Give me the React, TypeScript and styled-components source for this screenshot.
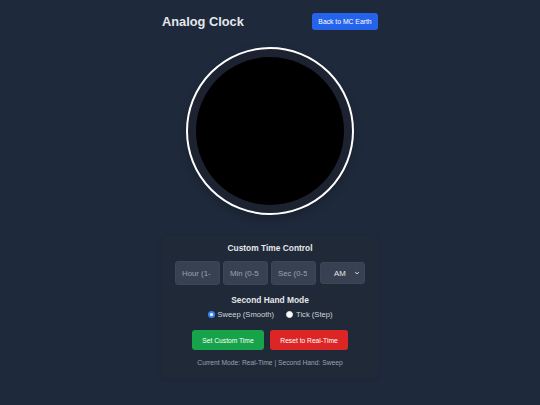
import React, { useState } from "react";
import styled, { createGlobalStyle } from "styled-components";

const Global = createGlobalStyle`
  html, body { margin: 0; padding: 0; background: #1e293b; }
  body { font-family: "Liberation Sans", Arial, sans-serif; color: #e5e7eb; }
  * { box-sizing: border-box; }
`;

const Page = styled.div`
  width: 540px;
  min-height: 405px;
  background: #1e293b;
  display: flex;
  justify-content: center;
`;

const Container = styled.div`
  width: 216px;
  padding-top: 13px;
  display: flex;
  flex-direction: column;
  align-items: center;
`;

const Header = styled.div`
  width: 100%;
  display: flex;
  justify-content: space-between;
  align-items: center;
  height: 17px;
`;

const Title = styled.h1`
  margin: 0;
  font-size: 12.8px;
  font-weight: 700;
  color: #e5e7eb;
`;

const BackButton = styled.button`
  background: #2563eb;
  color: #fff;
  border: none;
  border-radius: 3px;
  height: 17px;
  width: 66px;
  padding: 0;
  font-family: inherit;
  font-size: 6.8px;
  cursor: pointer;
`;

const ClockOuter = styled.div`
  margin-top: 17px;
  width: 168px;
  height: 168px;
  border-radius: 50%;
  border: 2px solid #ffffff;
  background: #1c2230;
  display: flex;
  align-items: center;
  justify-content: center;
  box-shadow: 0 4px 10px rgba(0, 0, 0, 0.2);
`;

const ClockFace = styled.div`
  width: 148px;
  height: 148px;
  border-radius: 50%;
  background: #000;
`;

const Panel = styled.div`
  margin-top: 21px;
  width: 216px;
  padding: 7px 13px 12px;
  background: #1f2937;
  border-radius: 4px;
  box-shadow: 0 1px 4px rgba(0, 0, 0, 0.12);
  display: flex;
  flex-direction: column;
  align-items: center;
`;

const SectionTitle = styled.h2`
  margin: 0;
  font-size: 8.4px;
  font-weight: 700;
  color: #e5e7eb;
  line-height: 10px;
`;

const InputRow = styled.div`
  margin-top: 8px;
  display: flex;
  gap: 3px;
  align-items: center;
`;

const TimeInput = styled.input`
  width: 45px;
  height: 24px;
  background: #374151;
  border: 1px solid #3b4656;
  border-radius: 3px;
  color: #e5e7eb;
  font-family: inherit;
  font-size: 7.8px;
  padding: 0 8px 0 6px;
  outline: none;
  &::placeholder { color: #9ca3af; }
`;

const SelectBox = styled.div`
  margin-left: 1px;
  width: 45px;
  height: 22px;
  background: #374151;
  border: 1px solid #3b4656;
  border-radius: 3px;
  display: flex;
  align-items: center;
  justify-content: space-between;
  padding: 0 4px 0 13px;
  font-size: 7.8px;
  color: #e5e7eb;
`;

const Chevron = styled.svg`
  width: 6px;
  height: 6px;
`;

const ModeTitle = styled(SectionTitle)`
  margin-top: 10px;
`;

const RadioRow = styled.div`
  margin-top: 5px;
  display: flex;
  gap: 12px;
  align-items: center;
`;

const RadioLabel = styled.label`
  display: flex;
  align-items: center;
  gap: 3px;
  font-size: 7.6px;
  color: #d1d5db;
  cursor: pointer;
`;

const RadioDot = styled.span<{ $checked: boolean }>`
  width: 7px;
  height: 7px;
  border-radius: 50%;
  background: #ffffff;
  border: ${(p) => (p.$checked ? "2px solid #3b82f6" : "1px solid #e5e7eb")};
  box-sizing: border-box;
`;

const ButtonRow = styled.div`
  margin-top: 11px;
  display: flex;
  gap: 6px;
`;

const ActionButton = styled.button<{ $color: string; $w: number }>`
  background: ${(p) => p.$color};
  color: #fff;
  border: none;
  border-radius: 3px;
  height: 20px;
  width: ${(p) => p.$w}px;
  font-family: inherit;
  font-size: 6.7px;
  padding: 0;
  cursor: pointer;
`;

const Status = styled.div`
  margin-top: 9px;
  font-size: 6.7px;
  color: #9ca3af;
`;

export default function App() {
  const [mode, setMode] = useState<"sweep" | "tick">("sweep");
  return (
    <>
      <Global />
      <Page>
        <Container>
          <Header>
            <Title>Analog Clock</Title>
            <BackButton>Back to MC Earth</BackButton>
          </Header>
          <ClockOuter>
            <ClockFace />
          </ClockOuter>
          <Panel>
            <SectionTitle>Custom Time Control</SectionTitle>
            <InputRow>
              <TimeInput placeholder="Hour (1-12)" />
              <TimeInput placeholder="Min (0-59)" />
              <TimeInput placeholder="Sec (0-59)" />
              <SelectBox>
                <span>AM</span>
                <Chevron viewBox="0 0 10 10">
                  <path d="M2 3.5 L5 6.5 L8 3.5" fill="none" stroke="#e5e7eb" strokeWidth="1.6" />
                </Chevron>
              </SelectBox>
            </InputRow>
            <ModeTitle>Second Hand Mode</ModeTitle>
            <RadioRow>
              <RadioLabel onClick={() => setMode("sweep")}>
                <RadioDot $checked={mode === "sweep"} />
                Sweep (Smooth)
              </RadioLabel>
              <RadioLabel onClick={() => setMode("tick")}>
                <RadioDot $checked={mode === "tick"} />
                Tick (Step)
              </RadioLabel>
            </RadioRow>
            <ButtonRow>
              <ActionButton $color="#16a34a" $w={72}>Set Custom Time</ActionButton>
              <ActionButton $color="#dc2626" $w={78}>Reset to Real-Time</ActionButton>
            </ButtonRow>
            <Status>Current Mode: Real-Time | Second Hand: {mode === "sweep" ? "Sweep" : "Tick"}</Status>
          </Panel>
        </Container>
      </Page>
    </>
  );
}
